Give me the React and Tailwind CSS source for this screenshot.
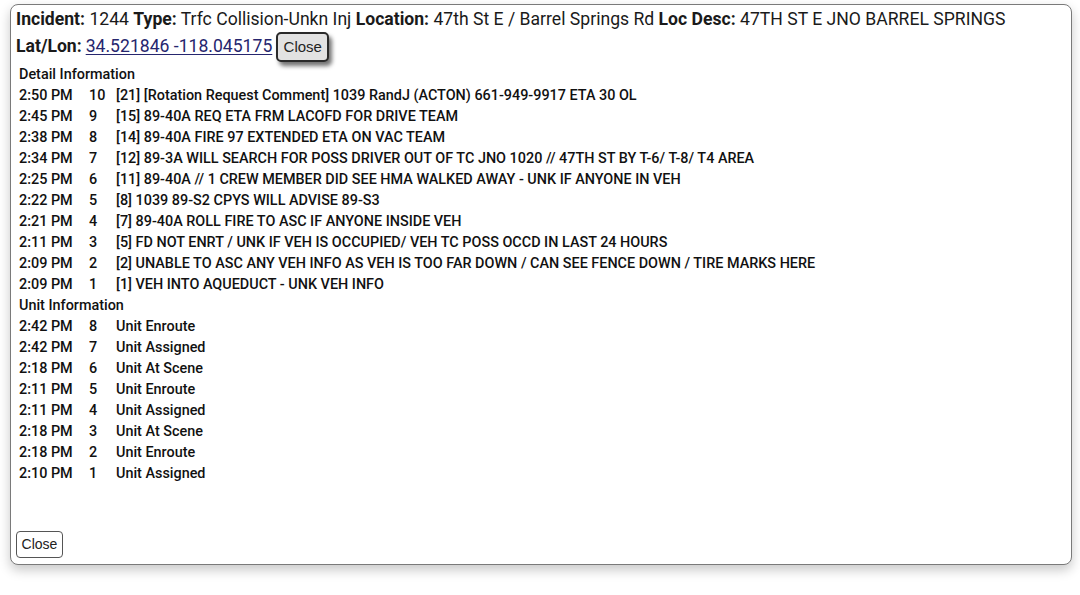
import React from "react";

const details = [
  ["2:50 PM", "10", "[21] [Rotation Request Comment] 1039 RandJ (ACTON) 661-949-9917 ETA 30 OL"],
  ["2:45 PM", "9", "[15] 89-40A REQ ETA FRM LACOFD FOR DRIVE TEAM"],
  ["2:38 PM", "8", "[14] 89-40A FIRE 97 EXTENDED ETA ON VAC TEAM"],
  ["2:34 PM", "7", "[12] 89-3A WILL SEARCH FOR POSS DRIVER OUT OF TC JNO 1020 // 47TH ST BY T-6/ T-8/ T4 AREA"],
  ["2:25 PM", "6", "[11] 89-40A // 1 CREW MEMBER DID SEE HMA WALKED AWAY - UNK IF ANYONE IN VEH"],
  ["2:22 PM", "5", "[8] 1039 89-S2 CPYS WILL ADVISE 89-S3"],
  ["2:21 PM", "4", "[7] 89-40A ROLL FIRE TO ASC IF ANYONE INSIDE VEH"],
  ["2:11 PM", "3", "[5] FD NOT ENRT / UNK IF VEH IS OCCUPIED/ VEH TC POSS OCCD IN LAST 24 HOURS"],
  ["2:09 PM", "2", "[2] UNABLE TO ASC ANY VEH INFO AS VEH IS TOO FAR DOWN / CAN SEE FENCE DOWN / TIRE MARKS HERE"],
  ["2:09 PM", "1", "[1] VEH INTO AQUEDUCT - UNK VEH INFO"],
];

const units = [
  ["2:42 PM", "8", "Unit Enroute"],
  ["2:42 PM", "7", "Unit Assigned"],
  ["2:18 PM", "6", "Unit At Scene"],
  ["2:11 PM", "5", "Unit Enroute"],
  ["2:11 PM", "4", "Unit Assigned"],
  ["2:18 PM", "3", "Unit At Scene"],
  ["2:18 PM", "2", "Unit Enroute"],
  ["2:10 PM", "1", "Unit Assigned"],
];

function Row({ r }) {
  return (
    <div className="flex h-[21px] items-center whitespace-nowrap">
      <span className="w-[70px]">{r[0]}</span>
      <span className="w-[27px]">{r[1]}</span>
      <span>{r[2]}</span>
    </div>
  );
}

export default function App() {
  return (
    <div className="w-[1080px] h-[595px] bg-white overflow-hidden" style={{ fontFamily: "Roboto, 'Liberation Sans', sans-serif" }}>
      <div className="ml-[10px] mt-[4px] w-[1062px] h-[561px] flex flex-col border border-[#7a7a7a] rounded-[8px] bg-white shadow-[0_5px_12px_rgba(0,0,0,0.22)] px-[5px] pt-[3px] pb-[6px] text-[#1a1a1a]">
        <div className="text-[17.6px] leading-[22px] whitespace-nowrap">
          <b className="font-bold">Incident:</b> 1244 <b className="font-bold">Type:</b> Trfc Collision-Unkn Inj{" "}
          <b className="font-bold">Location:</b> 47th St E / Barrel Springs Rd <b className="font-bold">Loc Desc:</b> 47TH ST E JNO BARREL SPRINGS
        </div>
        <div className="flex items-center h-[32px] text-[17.6px] whitespace-nowrap">
          <b className="font-bold">Lat/Lon:</b>
          <span className="ml-[4px] text-[#26266e] underline underline-offset-2 decoration-1">34.521846 -118.045175</span>
          <button
            className="ml-[4px] mt-[2px] w-[53px] h-[30px] rounded-[5px] border-2 border-[#2a2a2a] bg-[#e2e2e2] text-[15px] text-[#222] shadow-[3px_4px_4px_rgba(0,0,0,0.55)]"
            style={{ fontFamily: "'Liberation Sans', Arial, sans-serif" }}
          >
            Close
          </button>
        </div>
        <div className="mt-[2px] pl-[3px] text-[14.4px] font-medium leading-[21px] text-[#111]">
          <div className="h-[21px] flex items-center">Detail Information</div>
          {details.map((r, i) => (
            <Row key={i} r={r} />
          ))}
          <div className="h-[21px] flex items-center">Unit Information</div>
          {units.map((r, i) => (
            <Row key={i} r={r} />
          ))}
        </div>
        <div className="mt-auto">
          <button
            className="w-[47px] h-[27px] rounded-[4px] border border-[#555] bg-white text-[14px] text-[#222]"
            style={{ fontFamily: "'Liberation Sans', Arial, sans-serif" }}
          >
            Close
          </button>
        </div>
      </div>
    </div>
  );
}
